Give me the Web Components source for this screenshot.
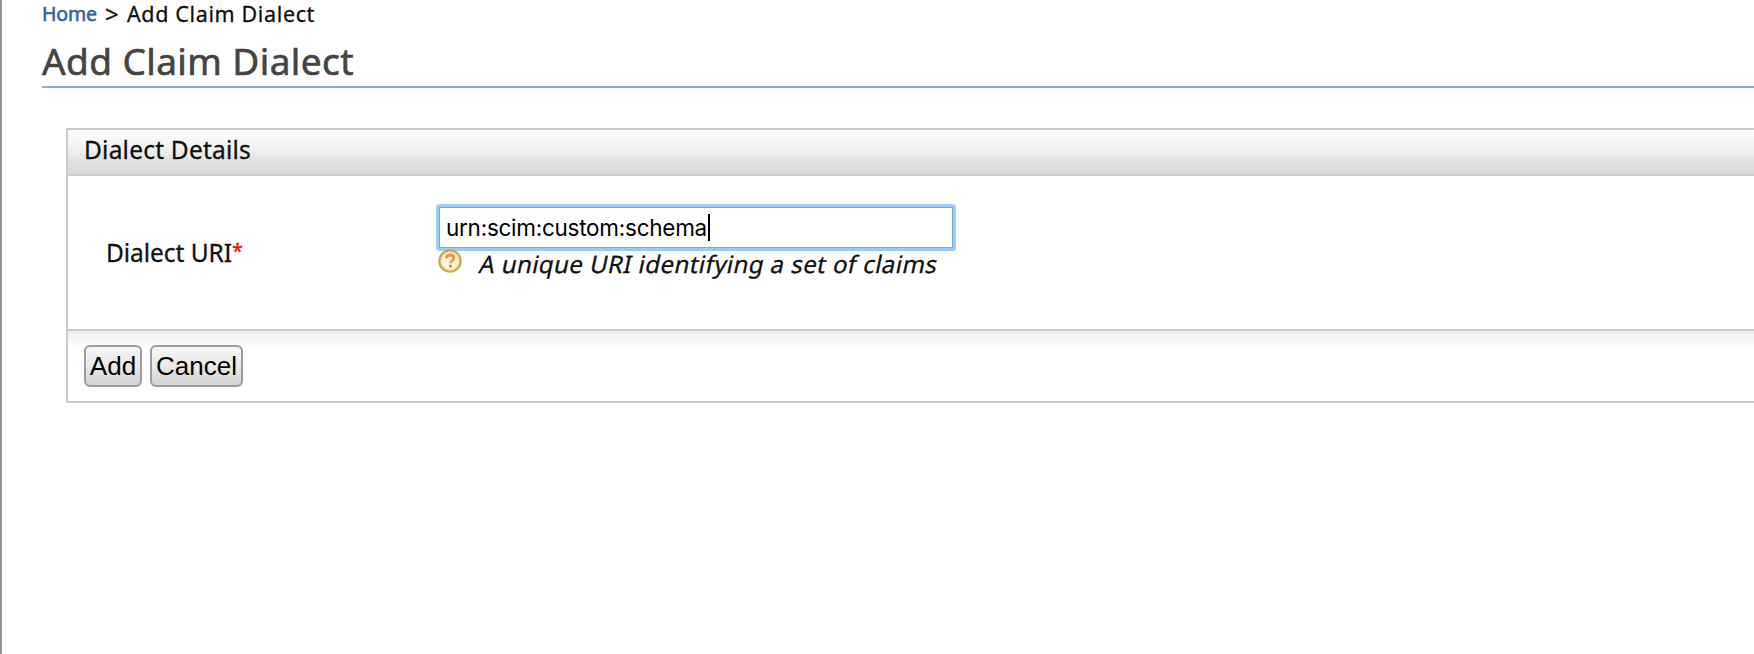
<!DOCTYPE html>
<html lang="en"><head><meta charset="utf-8"><title>Add Claim Dialect</title>
<style>html,body{margin:0;background:#fff}body{height:654px;overflow:hidden;font-family:"Noto Sans","Open Sans",sans-serif;color:#111;-webkit-text-stroke:.3px}</style></head>
<body><dialect-page></dialect-page>
<script>
const define=(name,html,Base=HTMLElement)=>customElements.define(name,class extends Base{
  constructor(){super();const t=document.createElement('template');t.innerHTML=html;this.attachShadow({mode:'open'}).appendChild(t.content.cloneNode(true));}
});

/* A single line of text, tracked so that it fills the width given in its w attribute. */
class TextLine extends HTMLElement{
  constructor(){super();this.attachShadow({mode:'open'}).innerHTML='<style>:host{display:block;flex:none;white-space:pre}span{display:inline-block}</style><span><slot></slot></span>';}
  connectedCallback(){
    const s=this.shadowRoot.querySelector('span'),w=+this.getAttribute('w');
    const text=this.shadowRoot.querySelector('slot').assignedNodes({flatten:true}).map(n=>n.textContent).join('');
    s.style.letterSpacing=(w-s.getBoundingClientRect().width)/text.length+'px';
    this.style.width=w+'px';
  }
}

define('bread-crumb',`<style>
:host{display:flex;height:30px;font-size:21.5px;line-height:28px}
.home{color:#35659c;font-size:19.5px;line-height:28px;margin-right:8px;-webkit-text-stroke:.6px}
.sep{margin-right:7px;font-size:24px}
</style><text-line class="home" w="55">Home</text-line><text-line class="sep" w="15">&gt;</text-line><text-line w="188">Add Claim Dialect</text-line>`);

define('page-title',`<style>
:host{display:block;box-sizing:border-box;height:58px;border-bottom:2px solid #94a9cd;color:#444;font-size:37px;line-height:50px;padding-top:6px;-webkit-text-stroke:.6px}
</style><text-line w="312"><slot></slot></text-line>`);

define('help-icon',`<style>:host{display:block;width:24px;height:24px;flex:none}svg{display:block}</style>
<svg width="24" height="24" viewBox="0 0 24 24"><circle cx="12" cy="12" r="10.6" fill="#fff4dc" stroke="#c9a650" stroke-width="2.4"/><circle cx="12" cy="12" r="8.9" fill="none" stroke="#f7df9c" stroke-width="1.4"/><path d="M8.2 9.2C8.3 7 9.8 6 12 6c2.3 0 3.9 1.1 3.9 3 0 2.7-3.4 2.8-3.4 5.3" fill="none" stroke="#ed9444" stroke-width="2.8"/><rect x="11" y="15.8" width="3" height="2.8" fill="#ed8844"/></svg>`);

define('text-field',`<style>
:host{display:flex;box-sizing:border-box;width:520px;height:47px;border:3px solid #9dcafc;border-radius:4px}
div{display:flex;flex:1;align-items:center;box-sizing:border-box;border:1px solid #78a9df;padding-left:6px;background:#fff;color:#000;font:22.5px/34px Inter,Roboto,sans-serif;-webkit-text-stroke:0}
i{width:2px;height:27px;background:#000;margin-left:1px}
</style><div><text-line w="261"><slot></slot></text-line><i></i></div>`);

define('push-button',`<style>
:host{display:flex;box-sizing:border-box;justify-content:center;height:42px;border:2px solid #9d9d9d;border-radius:6px;background:linear-gradient(#f6f6f6,#e9e9e9 50%,#d2d2d2);color:#000;font:26px/39px "Liberation Sans",Arial,sans-serif;-webkit-text-stroke:0}
</style><slot></slot>`);

define('form-panel',`<style>
:host{display:block;box-sizing:border-box;height:275px;border:2px solid #ccc;border-right:0}
header{box-sizing:border-box;height:46px;border-bottom:2px solid #ccc;background:linear-gradient(#fff,#f0f1f1 42%,#dfe1e3 70%,#d8d9da);padding-left:16px;font-size:24.5px;line-height:40px}
main{display:flex;box-sizing:border-box;height:155px;border-bottom:2px solid #ccc;padding:28px 0 0 38px}
footer{display:flex;gap:8px;box-sizing:border-box;height:70px;padding:14px 0 0 16px;background:linear-gradient(#ececec,#f8f8f8 9px,#fff 18px)}
</style><header><slot name="heading"></slot></header><main><slot></slot></main><footer><slot name="actions"></slot></footer>`);

define('field-label',`<style>
:host{display:flex;width:330px;height:40px;margin-top:32px;font-size:24.5px;line-height:33px}
b{font-weight:400;color:#f00;font-size:20px;line-height:29px}
</style><text-line w="126"><slot></slot></text-line><b>*</b>`);

define('field-hint',`<style>
:host{display:flex;gap:18px;font-size:24px;line-height:33px;padding-left:2px}
help-icon{margin-top:-2px}
text-line{margin-top:-4px;transform:skewX(-12deg)}
</style><help-icon></help-icon><text-line w="465"><slot></slot></text-line>`);

define('dialect-page',`<style>
:host{display:block;box-sizing:border-box;height:654px;border-left:2px solid #979797;padding-left:40px}
form-panel{margin:40px 0 0 24px}
</style>
<bread-crumb></bread-crumb><page-title>Add Claim Dialect</page-title>
<form-panel>
<text-line slot="heading" w="167">Dialect Details</text-line>
<field-label>Dialect URI</field-label>
<div><text-field>urn:scim:custom:schema</text-field><field-hint>A unique URI identifying a set of claims</field-hint></div>
<push-button slot="actions" style="width:58px">Add</push-button><push-button slot="actions" style="width:93px">Cancel</push-button>
</form-panel>`);
customElements.define('text-line',TextLine);
</script></body></html>
